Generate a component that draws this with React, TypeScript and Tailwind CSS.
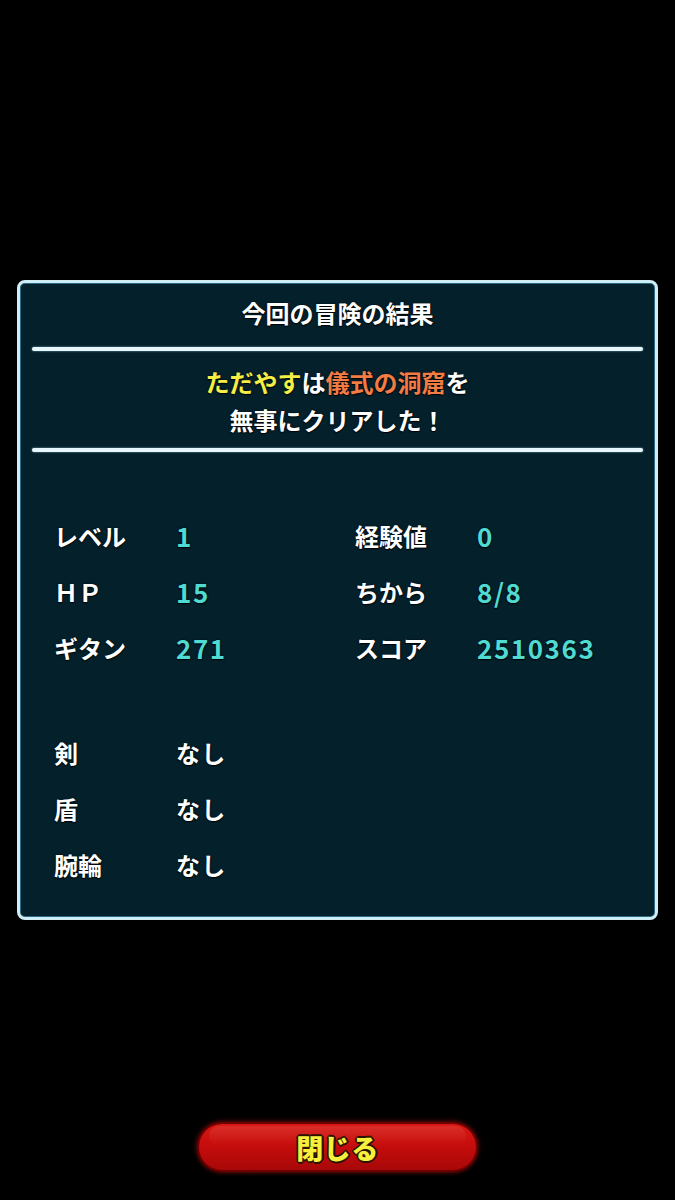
const stats = [
  { label: "レベル", value: "1", label2: "経験値", value2: "0" },
  { label: "ＨＰ", value: "15", label2: "ちから", value2: "8/8" },
  { label: "ギタン", value: "271", label2: "スコア", value2: "2510363" },
];

const gear = [
  { label: "剣", value: "なし" },
  { label: "盾", value: "なし" },
  { label: "腕輪", value: "なし" },
];

const font = "font-['Noto_Sans_CJK_JP','Noto_Sans',sans-serif]";
const shadow = "[text-shadow:0_1px_1px_rgba(0,0,0,0.9),0_0_2px_rgba(0,0,0,0.8)]";

function Divider() {
  return (
    <div className="mx-[12px] h-[4px] rounded-full bg-[#e6f6fb] shadow-[0_0_2px_rgba(160,220,240,0.8)]" />
  );
}

export default function App() {
  return (
    <div className={`flex h-[1200px] w-[675px] flex-col bg-black ${font}`}>
      <div className="ml-[17px] mt-[280px] w-[641px] rounded-[8px] border-[3px] border-[#cfeef8] bg-[#04202b] pb-[24px] shadow-[inset_0_0_0_1px_#2a6a84]">
        <p className={`mt-[12px] text-center text-[24px] leading-[36px] font-bold text-white ${shadow}`}>
          今回の冒険の結果
        </p>
        <div className="mt-[16px]">
          <Divider />
        </div>
        <div className={`mt-[12px] text-center text-[24px] leading-[38px] font-bold text-white ${shadow}`}>
          <p>
            <span className="text-[#f4ee45]">ただやす</span>は
            <span className="text-[#f27c44]">儀式の洞窟</span>を
          </p>
          <p>無事にクリアした！</p>
        </div>
        <div className="mt-[9px]">
          <Divider />
        </div>

        <div className={`mt-[56px] grid grid-cols-[122px_179px_122px_1fr] pl-[34px] text-[24px] font-bold ${shadow}`}>
          {stats.map((s) => (
            <div key={s.label} className="contents">
              <span className="leading-[56px] text-white">{s.label}</span>
              <span className="text-[26px] leading-[56px] tracking-[0.06em] text-[#4fdad2]">{s.value}</span>
              <span className="leading-[56px] text-white">{s.label2}</span>
              <span className="text-[26px] leading-[56px] tracking-[0.06em] text-[#4fdad2]">{s.value2}</span>
            </div>
          ))}
        </div>

        <div className={`mt-[49px] grid grid-cols-[122px_1fr] pl-[34px] text-[24px] font-bold ${shadow}`}>
          {gear.map((g) => (
            <div key={g.label} className="contents">
              <span className="leading-[56px] text-white">{g.label}</span>
              <span className="leading-[56px] tracking-[0.05em] text-white">{g.value}</span>
            </div>
          ))}
        </div>
      </div>

      <div className="mt-auto mb-[28px] flex justify-center">
        <button
          type="button"
          className="relative flex h-[50px] w-[281px] items-center justify-center overflow-hidden rounded-full border-2 border-[#6e0000] bg-gradient-to-b from-[#d81812] via-[#c40c0c] to-[#a80808] shadow-[0_0_5px_rgba(255,30,30,0.55)]"
        >
          <span className="absolute inset-x-[10px] top-[2px] h-[20px] rounded-full bg-gradient-to-b from-white/10 to-white/0" />
          <span
            className={`relative text-[27px] font-black leading-none tracking-[0.02em] text-[#f6ef3c] [text-shadow:-2px_0_0_#2a1400,2px_0_0_#2a1400,0_-2px_0_#2a1400,0_2px_0_#2a1400,-1px_-1px_0_#2a1400,1px_1px_0_#2a1400,-1px_1px_0_#2a1400,1px_-1px_0_#2a1400]`}
          >
            閉じる
          </span>
        </button>
      </div>
    </div>
  );
}
